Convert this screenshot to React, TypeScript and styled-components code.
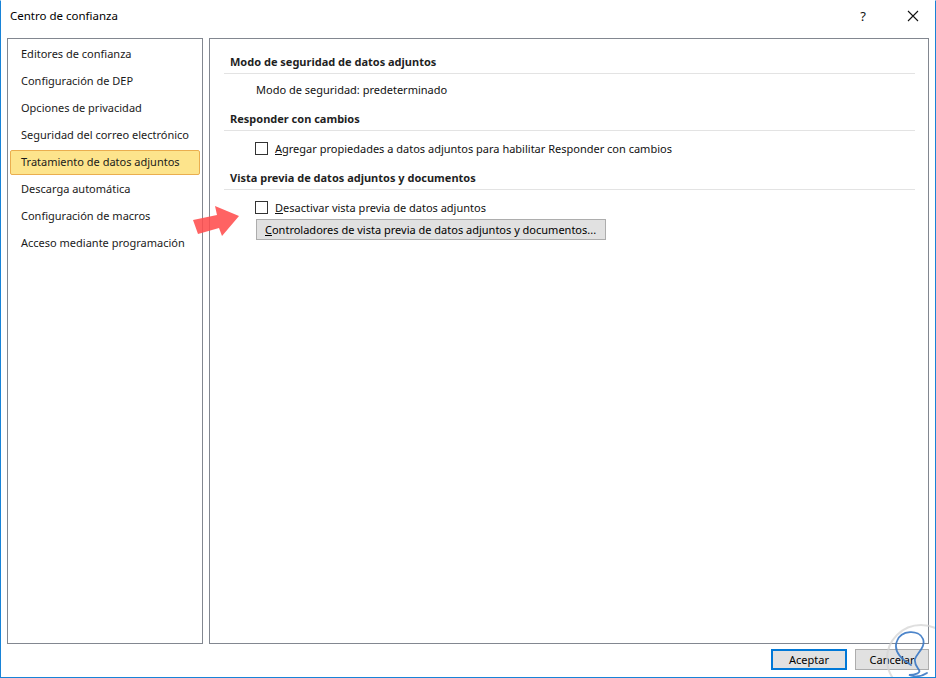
import styled, { createGlobalStyle } from 'styled-components';

const GlobalStyle = createGlobalStyle`
  html, body {
    margin: 0;
    padding: 0;
    background: #fff;
  }
  body {
    font-family: 'Noto Sans', 'Segoe UI', sans-serif;
    font-size: 11px;
    color: #000;
  }
`;

const Window = styled.div`
  position: relative;
  width: 936px;
  height: 678px;
  box-sizing: border-box;
  border: 1px solid #1883d7;
  border-top-color: #fff;
  background: #fff;
  display: flex;
  flex-direction: column;
  overflow: hidden;
`;

const TitleBar = styled.div`
  height: 37px;
  display: flex;
  align-items: center;
  padding: 0 0 8px 9px;
  box-sizing: border-box;

  .title {
    flex: 1;
    font-size: 11.5px;
  }
  .help {
    width: 20px;
    text-align: center;
    font-size: 13px;
    margin-right: 30px;
    color: #111;
  }
  .close {
    width: 20px;
    height: 20px;
    display: flex;
    align-items: center;
    justify-content: center;
    margin-right: 12px;
  }
`;

const Body = styled.div`
  display: flex;
  gap: 6px;
  padding: 0 6px;
  height: 606px;
`;

const Panel = styled.div<{ $width: number }>`
  width: ${(p) => p.$width}px;
  flex-shrink: 0;
  box-sizing: border-box;
  border: 1px solid #828790;
  background: #fff;
`;

const NavList = styled.ul`
  list-style: none;
  margin: 0;
  padding: 3px 2px 0;
  display: flex;
  flex-direction: column;
  gap: 2px;
`;

const NavItem = styled.li<{ $active?: boolean }>`
  height: 25px;
  line-height: 22px;
  box-sizing: border-box;
  padding-left: 10px;
  border: 1px solid ${(p) => (p.$active ? '#eaae4f' : 'transparent')};
  border-radius: 2px;
  background: ${(p) => (p.$active ? '#fde48c' : 'transparent')};
  color: #1a1a1a;
  white-space: nowrap;
`;

const Content = styled.div`
  padding: 13px 13px 0 14px;
`;

const Section = styled.section`
  & + & {
    margin-top: 10px;
  }
`;

const SectionTitle = styled.h3`
  margin: 0;
  padding: 0 0 1px 6px;
  line-height: 20px;
  font-size: 11px;
  font-weight: 700;
  color: #1f1f1f;
  border-bottom: 1px solid #e3e3e3;
`;

const SectionBody = styled.div`
  padding: 7px 0 0 32px;
  display: flex;
  flex-direction: column;
  align-items: flex-start;
`;

const InfoRow = styled.div`
  line-height: 18px;
  height: 18px;
  color: #111;
`;

const CheckRow = styled.label`
  display: flex;
  align-items: center;
  height: 20px;
  margin-left: -1px;
  color: #111;

  u {
    text-decoration: underline;
  }
`;

const Box = styled.span`
  width: 13px;
  height: 13px;
  box-sizing: border-box;
  border: 1px solid #333;
  background: #fff;
  margin-right: 7px;
`;

const GrayButton = styled.button<{ $primary?: boolean; $width: number }>`
  font-family: inherit;
  font-size: 11px;
  color: #000;
  height: 21px;
  width: ${(p) => p.$width}px;
  box-sizing: border-box;
  background: #e1e1e1;
  border: ${(p) => (p.$primary ? '2px solid #0078d7' : '1px solid #adadad')};
  padding: 0 8px;
  margin: 0;
  text-align: center;
  line-height: 17px;
  white-space: nowrap;
`;

const WideButton = styled(GrayButton)`
  margin-top: 2px;
  text-align: left;
`;

const Footer = styled.div`
  display: flex;
  justify-content: flex-end;
  gap: 8px;
  padding: 5px 6px 0;
`;

const Arrow = styled.svg`
  position: absolute;
  left: 188px;
  top: 200px;
  pointer-events: none;
`;

const Watermark = styled.svg`
  position: absolute;
  left: 876px;
  top: 612px;
  pointer-events: none;
`;

const sections = [
  'Editores de confianza',
  'Configuración de DEP',
  'Opciones de privacidad',
  'Seguridad del correo electrónico',
  'Tratamiento de datos adjuntos',
  'Descarga automática',
  'Configuración de macros',
  'Acceso mediante programación',
];

export default function App() {
  return (
    <>
      <GlobalStyle />
      <Window>
        <TitleBar>
          <span className="title">Centro de confianza</span>
          <span className="help">?</span>
          <span className="close">
            <svg width="12" height="12" viewBox="0 0 12 12">
              <path d="M1 1 L11 11 M11 1 L1 11" stroke="#111" strokeWidth="1.1" fill="none" />
            </svg>
          </span>
        </TitleBar>

        <Body>
          <Panel $width={196}>
            <NavList>
              {sections.map((s) => (
                <NavItem key={s} $active={s === 'Tratamiento de datos adjuntos'}>
                  {s}
                </NavItem>
              ))}
            </NavList>
          </Panel>

          <Panel $width={720}>
            <Content>
              <Section>
                <SectionTitle>Modo de seguridad de datos adjuntos</SectionTitle>
                <SectionBody>
                  <InfoRow>Modo de seguridad: predeterminado</InfoRow>
                </SectionBody>
              </Section>
              <Section>
                <SectionTitle>Responder con cambios</SectionTitle>
                <SectionBody>
                  <CheckRow>
                    <Box />
                    <span>
                      <u>A</u>gregar propiedades a datos adjuntos para habilitar Responder con cambios
                    </span>
                  </CheckRow>
                </SectionBody>
              </Section>
              <Section>
                <SectionTitle>Vista previa de datos adjuntos y documentos</SectionTitle>
                <SectionBody>
                  <CheckRow>
                    <Box />
                    <span>
                      <u>D</u>esactivar vista previa de datos adjuntos
                    </span>
                  </CheckRow>
                  <WideButton $width={350}>
                    <u>C</u>ontroladores de vista previa de datos adjuntos y documentos...
                  </WideButton>
                </SectionBody>
              </Section>
            </Content>
          </Panel>
        </Body>

        <Footer>
          <GrayButton $primary $width={76}>Aceptar</GrayButton>
          <GrayButton $width={74}>Cancelar</GrayButton>
        </Footer>

        <Arrow width="56" height="40" viewBox="0 0 56 40">
          <polygon
            points="4,19 9,33 30,27 33,35 50,15 26,5 28,14"
            fill="#ff4d4d"
            fillOpacity="0.88"
          />
        </Arrow>

        <Watermark width="64" height="70" viewBox="0 0 64 70">
          <circle cx="44" cy="46" r="34" fill="none" stroke="#d4d4d4" strokeWidth="2" opacity="0.75" />
          <path
            d="M34 52 C24 46 16 38 20 28 C24 17 42 16 46 26 C49 34 40 40 38 46 C37 51 40 54 42 57 C44 60 38 62 32 62 C38 64 44 64 50 60"
            fill="none"
            stroke="#3a78c4"
            strokeWidth="1.8"
            strokeLinecap="round"
            opacity="0.9"
          />
        </Watermark>
      </Window>
    </>
  );
}
